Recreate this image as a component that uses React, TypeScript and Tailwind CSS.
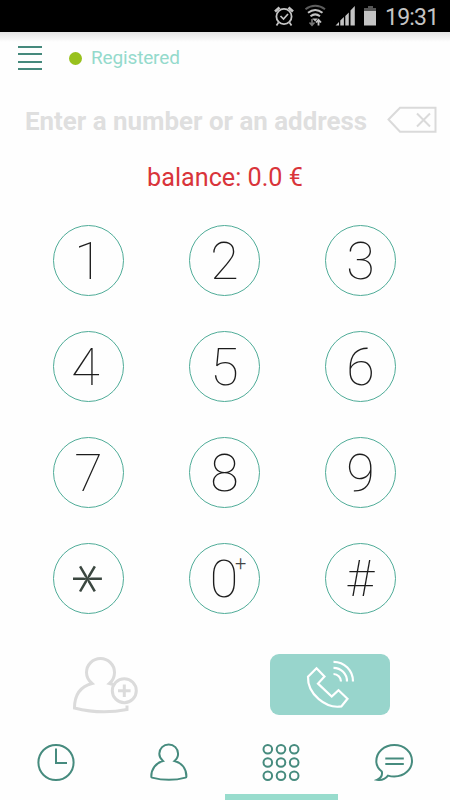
import { useState } from 'react';

type Tab = 'history' | 'contacts' | 'dialer' | 'chat';

const KEYS = ['1', '2', '3', '4', '5', '6', '7', '8', '9', '*', '0', '#'];

function StatusBar() {
  return (
    <div className="h-8 bg-black flex items-center justify-end text-[#c4c4c4]">
      <svg className="w-[113px] h-8" viewBox="270 0 113 32" fill="none" stroke="currentColor">
        {/* Alarm */}
        <circle cx="284" cy="16.5" r="7.6" strokeWidth="1.8" />
        <path d="M280.5 16l3 3 4.5-5M278.5 22.5l-2 3M289.5 22.5l2 3" strokeWidth="1.7" />
        <path d="M275 11.5l4.5-4M293 11.5l-4.5-4" strokeWidth="2.6" />
        {/* Wifi */}
        <path d="M305.5 9.3c6-4.6 13.5-4.6 19.5 0" stroke="#5d5d5d" strokeWidth="2" />
        <path d="M308 12.8c4.5-3.4 10-3.4 14.5 0M310.5 16.2c3-2.3 6.5-2.3 9.5 0" strokeWidth="2" />
        <path d="M312.3 18.5h5.5l-2.7 3z" fill="currentColor" stroke="none" />
        <path d="M312 19v5.5M309.5 22.5l2.5 2.7l2.5-2.7" stroke="#777" strokeWidth="1.6" />
        <path d="M318.5 25.5v-5M316 22.5l2.5-2.7l2.5 2.7" strokeWidth="1.8" />
        {/* Signal */}
        <path
          d="M335.5 25.5l3.5-3.5v3.5zM340.3 25.5v-5l3.6-3.5v8.5zM345.3 25.5v-9.5l3.5-3.5v13zM350.5 25.5v-15l4.3-4.5v19.5z"
          fill="currentColor"
          stroke="none"
        />
        {/* Battery */}
        <path d="M368 6h5v2h3v3h-12v-3h4z" fill="#555" stroke="none" />
        <path d="M364 11h12v14.5h-12z" fill="currentColor" stroke="none" />
      </svg>
      <span className="w-[67px] pl-[2px] text-[23px] leading-8 tracking-[-0.8px] pt-[3px] whitespace-nowrap">19:31</span>
    </div>
  );
}

function KeyLabel({ label }: { label: string }) {
  switch (label) {
    case '*':
      return (
        <span className="block w-[50px] h-[50px] ml-[9px] rotate-90 font-['Lato'] font-light text-[96px] leading-[101px] text-center text-[#3b4740]">
          *
        </span>
      );
    case '0':
      return (
        <>
          <span className="tracking-[-6px] mr-[7px] pt-[2px]">0</span>
          <span className="absolute left-[45px] top-[9px] text-[20px] leading-5 font-light text-[#444]">+</span>
        </>
      );
    case '4':
      return <span className="pt-[2px] pr-[6px]">4</span>;
    case '#':
      return <span className="text-[50px] pt-[1px] pr-[1px]">#</span>;
    default:
      return <span className="pt-[2px]">{label}</span>;
  }
}

function BottomIcon({ tab }: { tab: Tab }) {
  switch (tab) {
    case 'history':
      return (
        <>
          <circle cx="20" cy="20.500" r="17.6" />
          <path d="M20 6.500v14.500h11" />
        </>
      );
    case 'contacts':
      return (
        <path d="M14 19C11.200 16.500 10.300 14 10.300 11.800a9.400 9.400 0 0 1 18.800 0c0 2.700-1.200 5.200-3.600 7.200C33 21 37.400 27 37.400 34.500c0 .6-.4 1-.9 1.100C26 38.500 14 38.500 3 35.600c-.5-.1-.7-.5-.7-1.100 0-7.500 4.500-13.500 11.700-15.500z" />
      );
    case 'dialer':
      return (
        <>
          {[7.3, 20.5, 33.7].map((y) =>
            [6.8, 20, 33.2].map((x) => <circle key={`${x}-${y}`} cx={x} cy={y} r="4.3" />)
          )}
        </>
      );
    case 'chat':
      return (
        <>
          <path d="M7.800 29.500C4.500 26.900 2.300 23.400 2.300 19.300 2.300 10.300 10 3 20.300 3s17.700 7.300 17.700 15.800S30.500 34.500 20.300 34.500c-2.300 0-4.300-.3-6.300-.9-2.800 3.600-6.700 4.900-11 4.200 3.800-1.800 5.800-4.300 4.800-8.300z" />
          <path d="M11.300 16.500h18.500M11.300 22h18.500" />
        </>
      );
  }
}

export default function App() {
  const [activeTab, setActiveTab] = useState<Tab>('dialer');
  const tabs: Tab[] = ['history', 'contacts', 'dialer', 'chat'];

  return (
    <div className="w-[450px] h-[800px] bg-[#fefefe] overflow-hidden flex flex-col font-['Roboto',sans-serif]">
      <StatusBar />

      {/* Header */}
      <div className="h-[52px] flex items-center pl-[18px] bg-linear-to-b from-[#e4e4e4] to-[#fefefe] to-[10px]">
        <div className="w-[24px] h-[25px] flex flex-col justify-between">
          <div className="h-[2px] bg-[#45897c]" />
          <div className="h-[2px] bg-[#45897c]" />
          <div className="h-[2px] bg-[#45897c]" />
          <div className="h-[2px] bg-[#45897c]" />
        </div>
        <div className="w-[13px] h-[13px] rounded-full bg-[#98c11d] ml-[27px]" />
        <span className="ml-[9px] text-[19px] leading-6 tracking-[-0.15px] text-[#94dacc]">Registered</span>
      </div>

      {/* Number input */}
      <div className="h-[72px] flex items-center justify-between pl-[25px] pr-[13px]">
        <span className="text-[25.9px] pt-[2px] font-bold text-[#dfdfdf] whitespace-nowrap">Enter a number or an address</span>
        <svg className="w-[50px] h-[28px]" viewBox="0 0 50 28" fill="none" stroke="#dadada" strokeWidth="2">
          <path d="M1.500 13.500L13 1.800h35.500v24H13z" />
          <path d="M30 7.500l13 13M43 7.500l-13 13" />
        </svg>
      </div>

      <div className="h-[42px] text-center text-[25.2px] leading-[43px] text-[#d9343a]">balance: 0.0 €</div>

      {/* Dial pad */}
      <div className="mt-[27px] pl-[53px] pr-[54px] grid grid-cols-3 gap-x-[65px] gap-y-[35px]">
        {KEYS.map((key) => (
          <button
            key={key}
            className="relative w-[71px] h-[71px] rounded-full border border-[#4fac98] flex items-center justify-center text-[52px] leading-none font-thin text-[#1c1c1c]"
          >
            <KeyLabel label={key} />
          </button>
        ))}
      </div>

      {/* Actions */}
      <div className="mt-[40px] h-[61px] flex items-center pl-[72px] pr-[60px] justify-between">
        <button>
          <svg className="w-[67px] h-[60px]" viewBox="72 654 67 60" fill="none" stroke="#dbdbdb" strokeWidth="3">
            <path d="M127 704.5v4c-17 3.500-35 3-52.500-1.500 0-13 6-21.500 17.500-24.500-4-3.500-5.500-7-5.500-11a14 14 0 0 1 28 0c0 4-1 7.500-5 11 2.500.5 4 1.200 5.500 2" />
            <circle cx="124.3" cy="689.700" r="12" />
            <path d="M118 689.700h12.600M124.300 683.400v12.600" />
          </svg>
        </button>
        <button className="w-[120px] h-[61px] rounded-[9px] bg-[#98d5cc]">
          <svg className="w-[120px] h-[61px]" viewBox="270 654 120 61" fill="none" stroke="#fff" strokeWidth="2.2">
            <path d="M316.500 668.300l8 8.300-6.500 7 13.700 13 6.800-6.300 9 8.500-6.200 7.600c-15 2.500-34-12-33.300-29.600z" />
            <path d="M333.500 661.800a19.500 19.500 0 0 1 19.500 19.700M333.500 667.800a13.500 13.500 0 0 1 13.500 13.700M333.500 674a7.500 7.500 0 0 1 7.500 7.500" />
          </svg>
        </button>
      </div>

      {/* Bottom navigation */}
      <div className="mt-[10px] h-[75px] grid grid-cols-4">
        {tabs.map((tab) => (
          <button
            key={tab}
            onClick={() => setActiveTab(tab)}
            className={`flex justify-center pt-[17px] border-b-[6px] ${
              activeTab === tab ? 'border-[#98dccd]' : 'border-transparent'
            }`}
          >
            <svg className="w-10 h-10" viewBox="0 0 40 40" fill="none" stroke="#468b7e" strokeWidth="2">
              <BottomIcon tab={tab} />
            </svg>
          </button>
        ))}
      </div>
    </div>
  );
}
